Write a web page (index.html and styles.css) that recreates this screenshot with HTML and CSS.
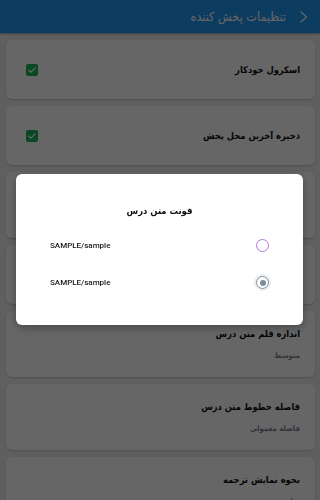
FILE: index.html
```html
<!DOCTYPE html>
<html lang="fa" dir="rtl">
<head>
<meta charset="utf-8">
<meta name="viewport" content="width=device-width, initial-scale=1">
<title>تنظیمات پخش کننده</title>
<link rel="stylesheet" href="styles.css">
</head>
<body>
<header class="appbar">
  <svg class="back" width="8" height="12" viewBox="0 0 8 12" aria-hidden="true"><polyline points="1,1 6.5,6 1,11" fill="none" stroke="#ffffff" stroke-width="1.1" stroke-linecap="round" stroke-linejoin="round"/></svg>
  <h1 class="appbar-title">تنظیمات پخش کننده</h1>
</header>
<main class="list">
  <section class="card card-check">
    <span class="card-title">اسکرول خودکار</span>
    <span class="checkbox"><svg width="12" height="12" viewBox="0 0 12 12"><polyline points="2.8,6.2 5,8.2 9.2,3.8" fill="none" stroke="#ffffff" stroke-width="1.2" stroke-linecap="round" stroke-linejoin="round"/></svg></span>
  </section>
  <section class="card card-check">
    <span class="card-title">ذخیره آخرین محل پخش</span>
    <span class="checkbox"><svg width="12" height="12" viewBox="0 0 12 12"><polyline points="2.8,6.2 5,8.2 9.2,3.8" fill="none" stroke="#ffffff" stroke-width="1.2" stroke-linecap="round" stroke-linejoin="round"/></svg></span>
  </section>
  <section class="card card-value">
    <span class="card-title">فونت متن درس</span>
    <span class="card-sub">SAMPLE/sample</span>
  </section>
  <section class="card card-check">
    <span class="card-title">نمایش ترجمه</span>
    <span class="checkbox"><svg width="12" height="12" viewBox="0 0 12 12"><polyline points="2.8,6.2 5,8.2 9.2,3.8" fill="none" stroke="#ffffff" stroke-width="1.2" stroke-linecap="round" stroke-linejoin="round"/></svg></span>
  </section>
  <section class="card card-value">
    <span class="card-title">اندازه قلم متن درس</span>
    <span class="card-sub">متوسط</span>
  </section>
  <section class="card card-value">
    <span class="card-title">فاصله خطوط متن درس</span>
    <span class="card-sub">فاصله معمولی</span>
  </section>
  <section class="card card-value">
    <span class="card-title">نحوه نمایش ترجمه</span>
    <span class="card-sub">نمایش ترجمه زیر متن درس</span>
  </section>
</main>
<div class="scrim"></div>
<div class="dialog" role="dialog">
  <h2 class="dialog-title">فونت متن درس</h2>
  <div class="option">
    <span class="radio radio-off"></span>
    <span class="option-label">SAMPLE/sample</span>
  </div>
  <div class="option">
    <span class="radio radio-on"></span>
    <span class="option-label">SAMPLE/sample</span>
  </div>
</div>
</body>
</html>
```
FILE: styles.css
```css
html, body {
  margin: 0;
  padding: 0;
}
body {
  height: 500px;
  overflow: hidden;
  background: #eeeeee;
  font-family: "DejaVu Sans Condensed", "DejaVu Sans", sans-serif;
  color: #111111;
}
.appbar {
  height: 33px;
  background: #2196f3;
  display: flex;
  align-items: center;
  padding-right: 12px;
  gap: 14px;
  box-shadow: 0 1px 2px rgba(0, 0, 0, 0.35);
  position: relative;
}
.back {
  display: block;
}
.appbar-title {
  margin: 0;
  font-size: 12.5px;
  font-weight: normal;
  color: #ffffff;
  line-height: 33px;
  white-space: nowrap;
}
.list {
  display: flex;
  flex-direction: column;
  gap: 7px;
  padding: 7px 5px 0 6px;
}
.card {
  background: #ffffff;
  border-radius: 6px;
  box-shadow: 0 1px 2px rgba(0, 0, 0, 0.18);
  box-sizing: border-box;
}
.card-check {
  height: 59px;
  display: flex;
  align-items: center;
  justify-content: space-between;
  padding: 0 15px 0 20px;
}
.card-value {
  height: 66px;
  display: flex;
  flex-direction: column;
  align-items: flex-start;
  padding: 15px 15px 0 15px;
  gap: 7px;
}
.card-title {
  font-size: 9.3px;
  font-weight: bold;
  line-height: 16px;
  color: #111111;
  white-space: nowrap;
}
.card-sub {
  font-size: 7.7px;
  font-weight: bold;
  line-height: 14px;
  color: #7a8591;
  white-space: nowrap;
}
.checkbox {
  width: 12px;
  height: 12px;
  border-radius: 2px;
  background: #17b455;
  display: flex;
}
.scrim {
  position: fixed;
  inset: 0;
  background: rgba(0, 0, 0, 0.6);
}
.dialog {
  position: fixed;
  left: 16px;
  right: 17px;
  top: 174px;
  height: 151px;
  box-sizing: border-box;
  background: #ffffff;
  border-radius: 6px;
  box-shadow: 0 3px 8px rgba(0, 0, 0, 0.3);
  padding: 28px 34px 0 34px;
}
.dialog-title {
  margin: 0 0 8px 0;
  text-align: center;
  font-size: 9.4px;
  font-weight: bold;
  line-height: 17px;
  color: #111111;
}
.option {
  height: 37px;
  display: flex;
  align-items: center;
  justify-content: space-between;
}
.option-label {
  font-family: Roboto, "Liberation Sans", sans-serif;
  font-size: 8px;
  font-weight: 500;
  color: #1a1a1a;
}
.radio {
  width: 13px;
  height: 13px;
  box-sizing: border-box;
  border-radius: 50%;
  display: flex;
  align-items: center;
  justify-content: center;
}
.radio-off {
  border: 1.5px solid #b773da;
}
.radio-on {
  border: 1.5px solid #7f8c97;
  box-shadow: 0 0 0 2px #eceef0;
}
.radio-on::after {
  content: "";
  width: 6px;
  height: 6px;
  border-radius: 50%;
  background: #7f8c97;
}
```
